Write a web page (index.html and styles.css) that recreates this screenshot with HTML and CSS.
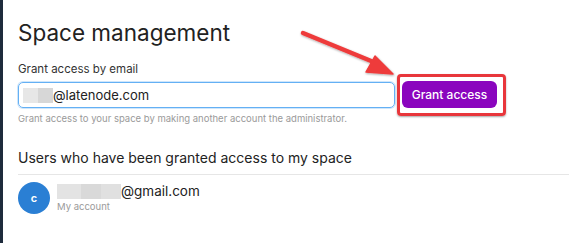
FILE: index.html
```html
<!DOCTYPE html>
<html lang="en">
<head>
  <meta charset="UTF-8">
  <meta name="viewport" content="width=device-width, initial-scale=1.0">
  <title>Space management</title>
  <link rel="stylesheet" href="styles.css">
</head>
<body>
  <div class="sidebar"></div>
  <div class="main">
    <h1 class="title">Space management</h1>
    <div class="label">Grant access by email</div>
    <div class="row">
      <div class="field">
        <span class="blur b1"></span><span class="blur b2"></span>@latenode.com
      </div>
      <div class="highlight">
        <button class="grant">Grant access</button>
      </div>
    </div>
    <div class="hint">Grant access to your space by making another account the administrator.</div>
    <h2 class="subtitle">Users who have been granted access to my space</h2>
    <div class="user">
      <div class="avatar">c</div>
      <div>
        <div class="email"><span class="blur u1"></span><span class="blur u2"></span><span class="blur u3"></span>@gmail.com</div>
        <div class="note">My account</div>
      </div>
    </div>
  </div>
  <svg class="arrow" width="569" height="243" viewBox="0 0 569 243">
    <defs>
      <filter id="sh" x="-20%" y="-20%" width="140%" height="140%">
        <feDropShadow dx="0.5" dy="1" stdDeviation="0.8" flood-color="#000" flood-opacity="0.35"/>
      </filter>
    </defs>
    <g filter="url(#sh)" fill="#ee3b3b" stroke="#ee3b3b">
      <line x1="303" y1="33" x2="376" y2="63" stroke-width="4.5" stroke-linecap="round"/>
      <polygon points="375,56 393,74 366,72" stroke-width="1.5" stroke-linejoin="round"/>
    </g>
  </svg>
</body>
</html>
```
FILE: styles.css
```css
html, body {
  margin: 0;
  height: 100%;
}
body {
  display: flex;
  font-family: Inter, "Noto Sans", sans-serif;
  background: #fff;
  color: #222;
  overflow: hidden;
}
.sidebar {
  width: 3px;
  background: #1e2b3c;
  flex-shrink: 0;
}
.main {
  flex: 1;
  padding: 19px 0 0 15px;
}
.title {
  margin: 0;
  font-size: 22.5px;
  line-height: 28px;
  font-weight: 400;
  color: #222;
}
.label {
  margin-top: 15px;
  font-size: 11.5px;
  line-height: 14px;
  color: #333;
}
.row {
  display: flex;
  align-items: center;
  gap: 2px;
  margin-top: -2px;
}
.field {
  box-sizing: border-box;
  width: 377px;
  height: 26px;
  border: 1px solid #64b0f4;
  box-shadow: 0 0 0 1px #cfe6fb;
  border-radius: 5px;
  display: flex;
  align-items: center;
  padding-left: 4px;
  font-size: 13px;
  color: #222;
}
.blur {
  display: inline-block;
  height: 15px;
}
.b1 { width: 15px; background: #e7e7e7; }
.b2 { width: 15px; background: #d7d7d7; }
.highlight {
  border: 3px solid #e8363b;
  border-radius: 4px;
  padding: 4px 6px 5px 2px;
  box-shadow: 0 1px 2px rgba(0, 0, 0, 0.35);
}
.grant {
  display: block;
  width: 95px;
  height: 27px;
  border: 0;
  border-radius: 6px;
  background: #8a05be;
  color: #fff;
  font-family: inherit;
  font-size: 12px;
  font-weight: 500;
  padding: 0;
}
.hint {
  margin-top: -3px;
  font-size: 9.5px;
  line-height: 12px;
  color: #9a9a9a;
}
.subtitle {
  margin: 24px 0 0;
  font-size: 14px;
  line-height: 18px;
  font-weight: 400;
  color: #222;
  padding-bottom: 7px;
  border-bottom: 1px solid #e6e6e6;
}
.user {
  display: flex;
  align-items: center;
  gap: 7px;
  padding-top: 7px;
}
.avatar {
  width: 32px;
  height: 32px;
  border-radius: 50%;
  background: #2a7fd4;
  color: #fff;
  font-size: 11px;
  font-weight: 600;
  display: flex;
  align-items: center;
  justify-content: center;
}
.email {
  display: flex;
  align-items: center;
  font-size: 13.5px;
  line-height: 16px;
  color: #222;
}
.u1 { width: 24px; background: #e3e3e3; }
.u2 { width: 20px; background: #d9d9d9; }
.u3 { width: 20px; background: #e0e0e0; }
.note {
  font-size: 9.5px;
  line-height: 12px;
  color: #9a9a9a;
  margin-top: 2px;
}
.arrow {
  position: absolute;
  left: 0;
  top: 0;
  pointer-events: none;
}
```
